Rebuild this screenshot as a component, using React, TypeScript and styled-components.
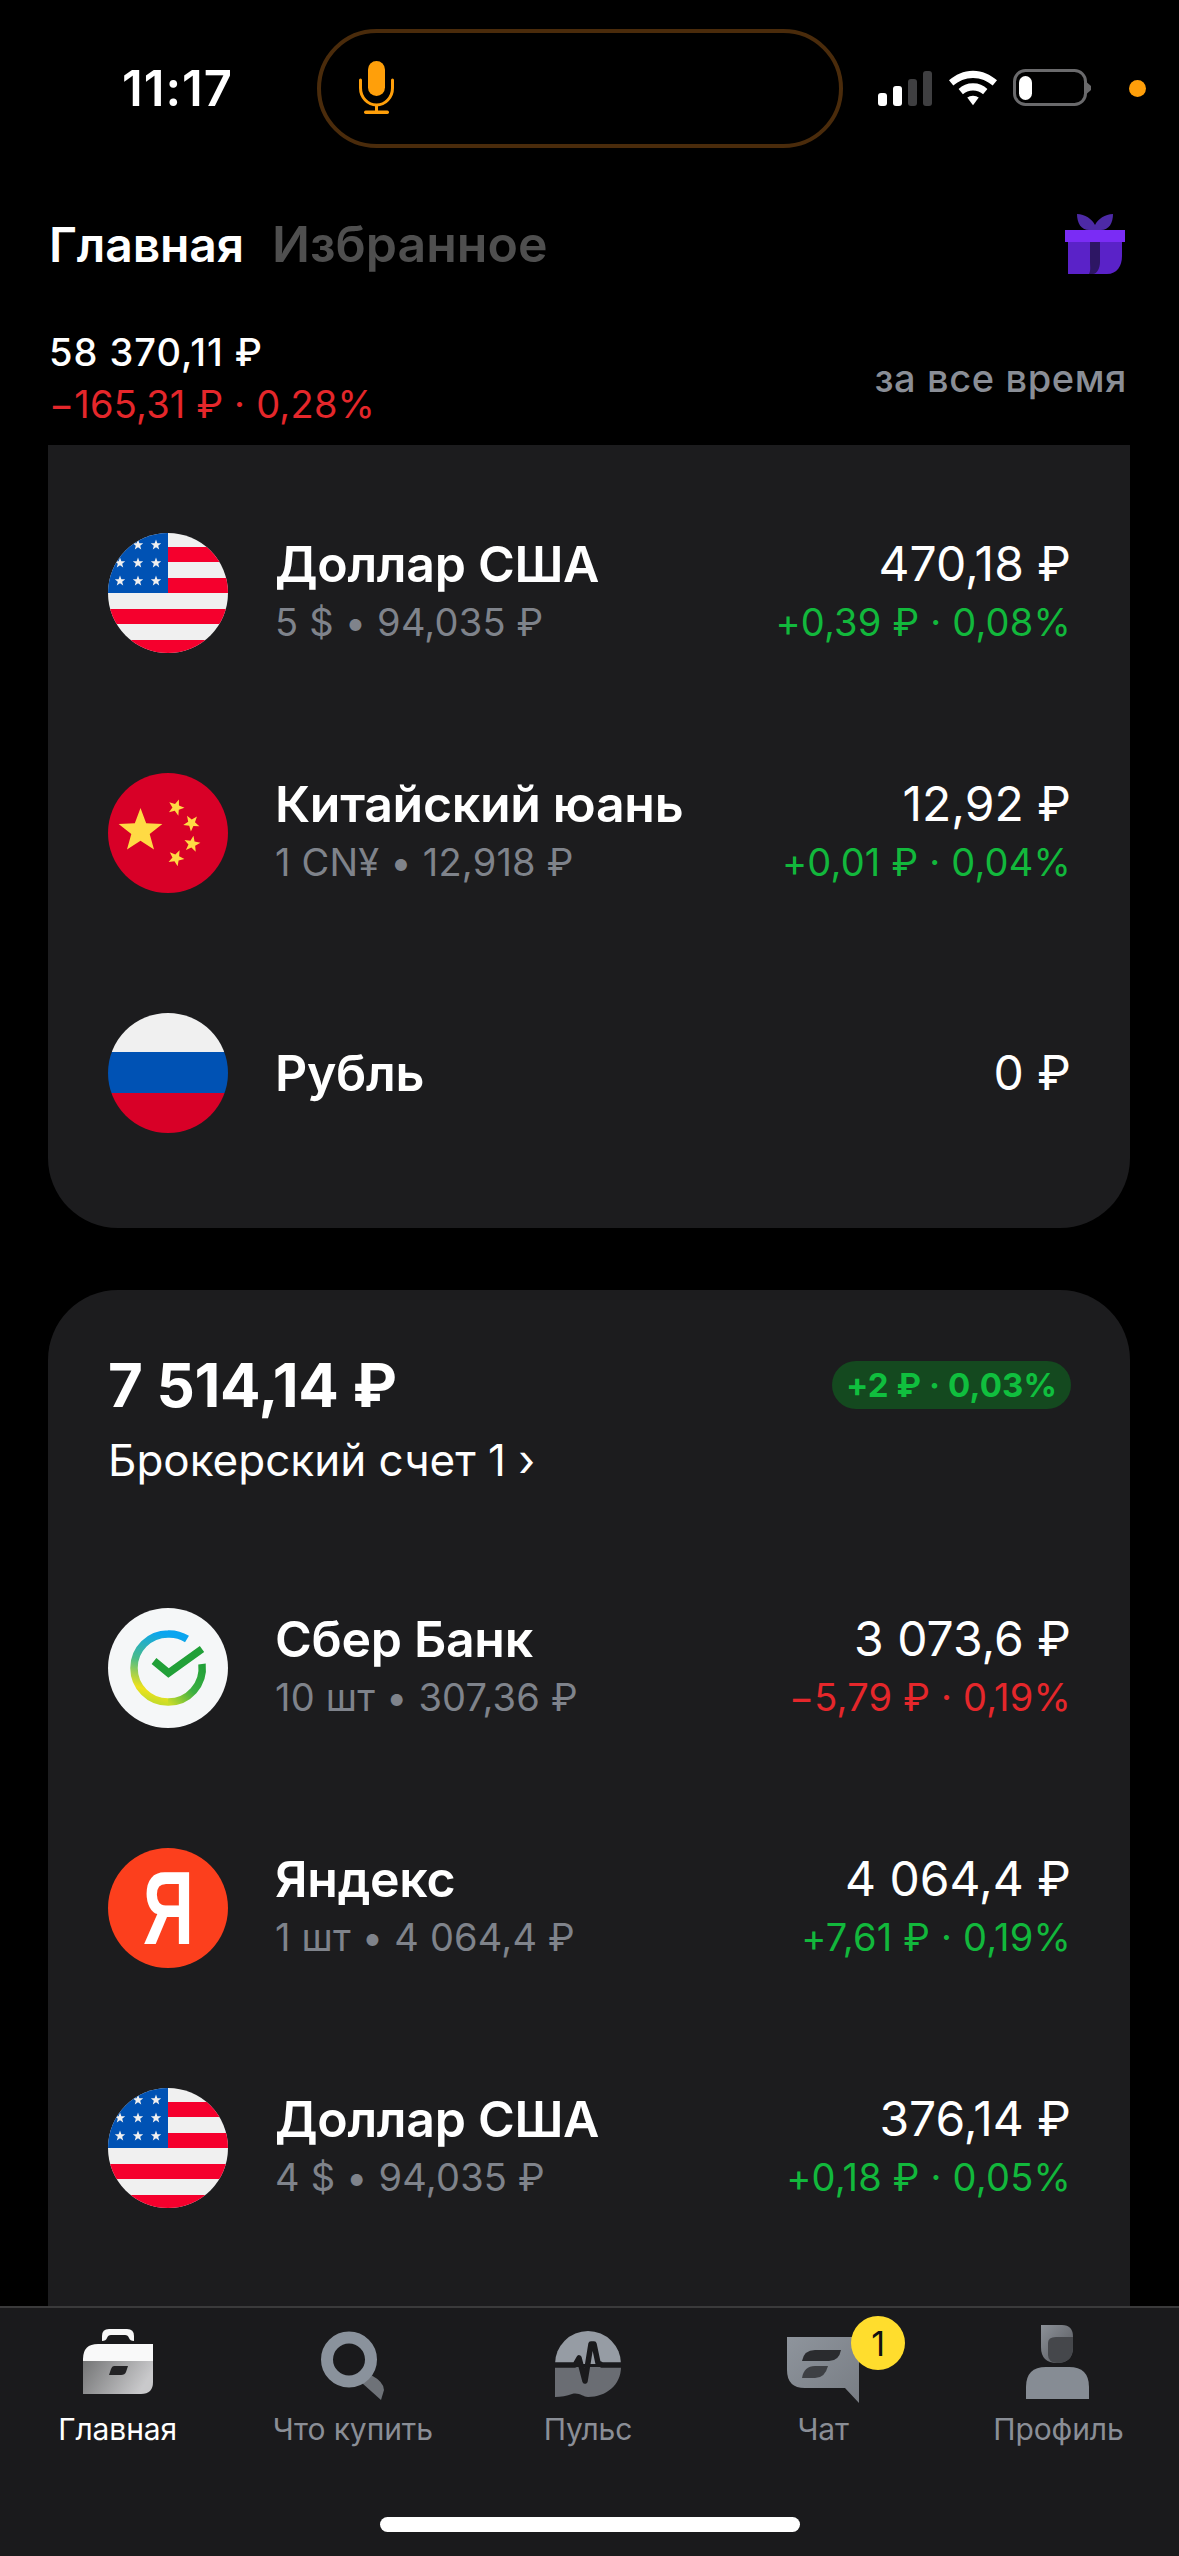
import React from 'react'
import styled, { createGlobalStyle } from 'styled-components'

const GlobalStyle = createGlobalStyle`
  html, body {
    margin: 0;
    padding: 0;
    background: #000;
  }
  body {
    font-family: Inter, "Noto Sans", "Liberation Sans", sans-serif;
  }
  * {
    box-sizing: border-box;
  }
`

const Screen = styled.div`
  position: relative;
  width: 1179px;
  height: 2556px;
  overflow: hidden;
  background: #000;
  color: #fff;
`
const StatusBar = styled.div`
  display: flex;
  align-items: center;
  height: 118px;
  margin-top: 29px;
  padding-left: 122px;
`
const Time = styled.div`
  width: 195px;
  font-size: 49px;
  font-weight: 600;
  letter-spacing: 1px;
`
const Island = styled.div`
  display: flex;
  align-items: center;
  width: 526px;
  height: 119px;
  padding-left: 37px;
  border: 4px solid #4a2b0b;
  border-radius: 60px;
`
const StatusIcons = styled.div`
  display: flex;
  align-items: center;
  margin-left: 35px;
  gap: 16px;
`
const OrangeDot = styled.div`
  width: 17px;
  height: 17px;
  margin-left: 38px;
  border-radius: 50%;
  background: #ff9f0a;
`
const Header = styled.div`
  display: flex;
  align-items: center;
  justify-content: space-between;
  height: 62px;
  margin-top: 66px;
  padding: 0 54px 0 49px;
`
const Tabs = styled.div`
  display: flex;
  align-items: baseline;
  gap: 28px;
`
const Tab = styled.div<{ $active?: boolean }>`
  font-size: ${({ $active }) => ($active ? '48px' : '50px')};
  font-weight: 600;
  letter-spacing: ${({ $active }) => ($active ? '-0.1px' : '0')};
  color: ${({ $active }) => ($active ? '#fff' : '#4f4f4f')};
`
const Summary = styled.div`
  display: flex;
  align-items: center;
  justify-content: space-between;
  height: 100px;
  margin: 53px 0 17px;
  padding: 0 52px 0 49px;
`
const SummaryTotal = styled.div`
  font-size: 38px;
  font-weight: 500;
  line-height: 52px;
  letter-spacing: 1px;
`
const SummaryDelta = styled.div`
  font-size: 38px;
  line-height: 52px;
  letter-spacing: 0.2px;
  color: #e5272b;
`
const Period = styled.div`
  font-size: 38px;
  font-weight: 500;
  letter-spacing: 0.6px;
  color: #8a8e96;
`
const Card = styled.div<{ $first?: boolean }>`
  margin: ${({ $first }) => ($first ? '0' : '62px')} 49px 0 48px;
  padding: ${({ $first }) => ($first ? '28px 59px 35px 60px' : '0 59px 200px 60px')};
  background: #1c1c1e;
  border-radius: ${({ $first }) => ($first ? '0 0 70px 70px' : '70px 70px 0 0')};
`
const CardHead = styled.div`
  height: 258px;
  padding-top: 65px;
`
const CardHeadTop = styled.div`
  display: flex;
  align-items: center;
  justify-content: space-between;
  height: 60px;
`
const CardTotal = styled.div`
  font-size: 60px;
  font-weight: 700;
  letter-spacing: -0.3px;
`
const Pill = styled.div`
  display: flex;
  align-items: center;
  height: 48px;
  padding: 0 14px;
  border-radius: 24px;
  background: #14491f;
  color: #10bf3e;
  font-size: 33px;
  font-weight: 700;
  letter-spacing: 0.1px;
`
const AccountName = styled.div`
  margin-top: 20px;
  font-size: 44px;
  line-height: 50px;
`
const Row = styled.div`
  display: flex;
  align-items: center;
  height: 240px;
`
const Avatar = styled.div`
  flex: none;
  width: 120px;
  height: 120px;
  margin-right: 47px;
  border-radius: 50%;
  overflow: hidden;
`
const YandexMark = styled(Avatar)`
  display: flex;
  align-items: center;
  justify-content: center;
  background: #fc3f1d;
  font-family: "Liberation Sans", sans-serif;
  font-size: 104px;
  font-weight: 700;
`
const YandexLetter = styled.span`
  display: block;
  transform: scaleX(0.68);
`
const RowMain = styled.div`
  flex: 1;
  min-width: 0;
`
const RowSide = styled.div`
  text-align: right;
`
const Name = styled.div`
  font-size: 50px;
  font-weight: 600;
  line-height: 58px;
  letter-spacing: -0.3px;
`
const Sub = styled.div`
  font-size: 38px;
  line-height: 58px;
  letter-spacing: 0.2px;
  color: #7f838b;
`
const Value = styled.div`
  font-size: 48px;
  line-height: 58px;
`
const Delta = styled.div<{ $down?: boolean }>`
  font-size: 38px;
  line-height: 58px;
  letter-spacing: 0.2px;
  color: ${({ $down }) => ($down ? '#e5272b' : '#12b83c')};
`
const TabBar = styled.div`
  position: absolute;
  left: 0;
  right: 0;
  bottom: 0;
  height: 250px;
  border-top: 2px solid #3a3a3b;
  background: #1a1a1c;
`
const TabBarItems = styled.div`
  display: grid;
  grid-template-columns: repeat(5, 1fr);
  padding-right: 3px;
`
const TabItem = styled.div<{ $active?: boolean }>`
  position: relative;
  display: flex;
  flex-direction: column;
  align-items: center;
  color: ${({ $active }) => ($active ? '#fff' : '#8a8e96')};
`
const TabIcon = styled.div`
  display: flex;
  justify-content: center;
  height: 96px;
`
const TabLabel = styled.div`
  margin-top: 7px;
  font-size: 30px;
  line-height: 36px;
  letter-spacing: -0.1px;
`
const Badge = styled.div`
  position: absolute;
  top: 8px;
  left: 50%;
  margin-left: 28px;
  display: flex;
  align-items: center;
  justify-content: center;
  width: 54px;
  height: 54px;
  border-radius: 50%;
  background: #ffdd2d;
  color: #111;
  font-size: 34px;
`
const HomeIndicator = styled.div`
  position: absolute;
  left: 380px;
  bottom: 24px;
  width: 420px;
  height: 15px;
  border-radius: 8px;
  background: #fff;
`

const Star = ({ x, y, r, fill, rot = 0 }: { x: number; y: number; r: number; fill: string; rot?: number }) => {
  const points = Array.from({ length: 10 }, (_, i) => {
    const a = (Math.PI / 5) * i - Math.PI / 2 + (rot * Math.PI) / 180
    const rad = i % 2 === 0 ? r : r * 0.42
    return `${(x + rad * Math.cos(a)).toFixed(2)},${(y + rad * Math.sin(a)).toFixed(2)}`
  })
  return <polygon points={points.join(' ')} fill={fill} />
}

const UsFlag = () => (
  <svg width="120" height="120" viewBox="0 0 120 120">
    <rect width="120" height="120" fill="#f0f0f0" />
    {[14, 45, 76, 107].map((y) => (
      <rect key={y} x={y < 60 ? 60 : 0} y={y} width="120" height="15" fill="#f5002d" />
    ))}
    <rect x="0" y="0" width="60" height="60" fill="#0052b4" />
    {[
      [30, 12],
      [48, 12],
      [12, 30],
      [30, 30],
      [48, 30],
      [12, 48],
      [30, 48],
      [48, 48],
    ].map(([x, y]) => (
      <Star key={`${x}-${y}`} x={x} y={y} r={5.5} fill="#f0f0f0" />
    ))}
  </svg>
)

const CnFlag = () => (
  <svg width="120" height="120" viewBox="0 0 120 120">
    <rect width="120" height="120" fill="#d80027" />
    <Star x={32.5} y={58} r={23} fill="#ffda44" />
    <Star x={68} y={34.5} r={8.5} fill="#ffda44" rot={20} />
    <Star x={83.5} y={50} r={8.5} fill="#ffda44" rot={40} />
    <Star x={84} y={71} r={8.5} fill="#ffda44" rot={10} />
    <Star x={68} y={85} r={8.5} fill="#ffda44" rot={25} />
  </svg>
)

const RuFlag = () => (
  <svg width="120" height="120" viewBox="0 0 120 120">
    <rect width="120" height="39" fill="#f0f0f0" />
    <rect y="39" width="120" height="41" fill="#0052b4" />
    <rect y="80" width="120" height="40" fill="#d80027" />
  </svg>
)

const SberLogo = () => (
  <svg width="120" height="120" viewBox="0 0 120 120">
    <defs>
      <linearGradient id="sberLeft" x1="0.6" y1="0" x2="0.4" y2="1">
        <stop offset="0" stopColor="#0aa5f0" />
        <stop offset="0.45" stopColor="#49bb8a" />
        <stop offset="0.85" stopColor="#efe21c" />
        <stop offset="1" stopColor="#c8dc2a" />
      </linearGradient>
      <linearGradient id="sberRight" x1="0" y1="1" x2="1" y2="0">
        <stop offset="0" stopColor="#c8dc2a" />
        <stop offset="0.5" stopColor="#3cb043" />
        <stop offset="1" stopColor="#21a038" />
      </linearGradient>
    </defs>
    <rect width="120" height="120" fill="#f5f7f8" />
    <path d="M79 31 A34 34 0 0 0 60 26 A34 34 0 0 0 60 94" fill="none" stroke="url(#sberLeft)" strokeWidth="7.5" />
    <path d="M60 94 A34 34 0 0 0 94 56" fill="none" stroke="url(#sberRight)" strokeWidth="7.5" />
    <path d="M46 53 L60.5 65 L94 41" fill="none" stroke="#21a038" strokeWidth="7.5" />
  </svg>
)

const MicIcon = () => (
  <svg width="38" height="54" viewBox="0 0 38 54">
    <rect x="10" y="0" width="17" height="35" rx="8.5" fill="#ff9f0a" />
    <path d="M2.5 19 v8 a16 17 0 0 0 32 0 v-8" fill="none" stroke="#ff9f0a" strokeWidth="3" strokeLinecap="round" />
    <rect x="17" y="44" width="3" height="6" fill="#ff9f0a" />
    <rect x="6" y="49.5" width="25" height="3.5" rx="1.7" fill="#ff9f0a" />
  </svg>
)

const SignalIcon = () => (
  <svg width="55" height="35" viewBox="0 0 55 35">
    <rect x="0" y="22" width="9" height="13" rx="3" fill="#fff" />
    <rect x="15" y="15" width="9" height="20" rx="3" fill="#fff" />
    <rect x="30" y="8" width="9" height="27" rx="3" fill="#3f3f41" />
    <rect x="45" y="0" width="9" height="35" rx="3" fill="#3f3f41" />
  </svg>
)

const WifiIcon = () => (
  <svg width="48" height="36" viewBox="0 0 50 36">
    <path d="M25 0 C35 0 43 4 50 10 L45.5 15.5 C40 10.5 33 7.5 25 7.5 C17 7.5 10 10.5 4.5 15.5 L0 10 C7 4 15 0 25 0 Z" fill="#fff" />
    <path d="M25 13 C31 13 36 15 40 19 L35.5 24.5 C33 22 29 20.5 25 20.5 C21 20.5 17 22 14.5 24.5 L10 19 C14 15 19 13 25 13 Z" fill="#fff" />
    <path d="M25 26 C27.5 26 29.5 26.8 31 28 L25 36 L19 28 C20.5 26.8 22.5 26 25 26 Z" fill="#fff" />
  </svg>
)

const BatteryIcon = () => (
  <svg width="78" height="38" viewBox="0 0 78 38">
    <rect x="1.5" y="1.5" width="71" height="34" rx="11" fill="none" stroke="#6a6a6c" strokeWidth="3" />
    <rect x="6" y="7" width="13" height="24" rx="6.5" fill="#fff" />
    <path d="M74 13.5 L78 17 V21 L74 24.5 Z" fill="#6a6a6c" />
  </svg>
)

const GiftIcon = () => (
  <svg width="60" height="60" viewBox="0 0 60 60">
    <path d="M12 0 C20 0 27 5 30 11 C33 5 40 0 48 0 C48 9 44 16 36 16 H24 C16 16 12 9 12 0 Z" fill="#4d2aa6" />
    <rect x="0" y="16" width="60" height="12" fill="#7a2cf5" />
    <path d="M3 28 H57 V42 C57 52 52 60 42 60 H3 Z" fill="#5a22c8" />
    <path d="M25 28 H35 V48 C35 54 32 60 28 60 H24 C26 56 25 52 25 48 Z" fill="#2d1664" />
  </svg>
)

const BriefcaseIcon = () => (
  <svg width="70" height="96" viewBox="0 -21 70 96">
    <defs>
      <linearGradient id="caseBody" x1="0" y1="0" x2="1" y2="0.3">
        <stop offset="0" stopColor="#747576" />
        <stop offset="1" stopColor="#c9c9cb" />
      </linearGradient>
    </defs>
    <path d="M19 12 V7 Q19 0 26 0 H44 Q51 0 51 7 V12 Q47 12 46 9 Q45 6 42 6 H28 Q25 6 24 9 Q23 12 19 12 Z" fill="#f7f7f7" />
    <path d="M15 15 H70 V32 H0 V30 Q0 15 15 15 Z" fill="#f9f9f9" />
    <path d="M0 32 H70 V53 Q70 65 58 65 H0 Z" fill="url(#caseBody)" />
    <path d="M31 37 H45 L43 43 Q42 46 38 46 H26 L28 40 Q29 37 31 37 Z" fill="#232325" />
  </svg>
)

const SearchIcon = () => (
  <svg width="64" height="96" viewBox="0 -24 64 96">
    <path d="M41 51 L50 43 Q63 50 63 58 L60 68 Z" fill="#6e7278" />
    <circle cx="28" cy="27.5" r="22" fill="none" stroke="#8a929c" strokeWidth="12" />
  </svg>
)

const PulseIcon = () => (
  <svg width="66" height="96" viewBox="0 -23 66 96">
    <path d="M0 33 A33 33 0 0 1 66 33 Z" fill="#969ca4" />
    <path d="M0 36 H66 C66 54 51 66 33 66 C28 66 24 61 17 63 C12 65 6 66 0 66 Z" fill="#6a6d73" />
    <path d="M0 34 H20 L24 27 L30 50 L36 13 H39 L43 32 L47 34 H66" fill="none" stroke="#1a1a1c" strokeWidth="5.5" strokeLinejoin="round" />
  </svg>
)

const ChatIcon = () => (
  <svg width="72" height="96" viewBox="0 -29 72 96">
    <defs>
      <linearGradient id="chatFill" x1="0" y1="0" x2="1" y2="1">
        <stop offset="0" stopColor="#8e949c" />
        <stop offset="1" stopColor="#787d84" />
      </linearGradient>
    </defs>
    <path d="M0 0 H72 V66 L58 51 H18 Q0 51 0 33 Z" fill="url(#chatFill)" />
    <path d="M15 24 Q17 13 28 13 H54 Q52 24 42 24 Z" fill="#2a2b2e" />
    <path d="M15 41 Q17 29 28 29 H41 Q38 41 28 41 Z" fill="#3e4044" />
  </svg>
)

const ProfileIcon = () => (
  <svg width="64" height="96" viewBox="0 -17 64 96">
    <defs>
      <linearGradient id="hairFill" x1="0" y1="0" x2="1" y2="1">
        <stop offset="0" stopColor="#8c9198" />
        <stop offset="1" stopColor="#55575c" />
      </linearGradient>
    </defs>
    <path d="M15 0 H36 Q47 0 47 12 V22 Q47 38 31 38 Q15 38 15 22 Z" fill="url(#hairFill)" />
    <path d="M22 18 Q22 12 30 12 H47 V22 Q47 38 31 38 Q22 37 22 30 Z" fill="#45474b" />
    <path d="M0 74 V62 Q0 42 20 42 H43 Q63 42 63 62 V74 Z" fill="#868c94" />
  </svg>
)

type Position = {
  name: string
  sub?: string
  value: string
  delta?: string
  down?: boolean
  icon: React.ReactNode
}

const currencies: Position[] = [
  { name: 'Доллар США', sub: '5 $ • 94,035 ₽', value: '470,18 ₽', delta: '+0,39 ₽ · 0,08%', icon: <UsFlag /> },
  { name: 'Китайский юань', sub: '1 CN¥ • 12,918 ₽', value: '12,92 ₽', delta: '+0,01 ₽ · 0,04%', icon: <CnFlag /> },
  { name: 'Рубль', value: '0 ₽', icon: <RuFlag /> },
]

const stocks: Position[] = [
  { name: 'Сбер Банк', sub: '10 шт • 307,36 ₽', value: '3 073,6 ₽', delta: '−5,79 ₽ · 0,19%', down: true, icon: <SberLogo /> },
  { name: 'Яндекс', sub: '1 шт • 4 064,4 ₽', value: '4 064,4 ₽', delta: '+7,61 ₽ · 0,19%', icon: null },
  { name: 'Доллар США', sub: '4 $ • 94,035 ₽', value: '376,14 ₽', delta: '+0,18 ₽ · 0,05%', icon: <UsFlag /> },
]

const PositionRow = ({ item }: { item: Position }) => (
  <Row>
    {item.icon ? (
      <Avatar>{item.icon}</Avatar>
    ) : (
      <YandexMark>
        <YandexLetter>Я</YandexLetter>
      </YandexMark>
    )}
    <RowMain>
      <Name>{item.name}</Name>
      {item.sub && <Sub>{item.sub}</Sub>}
    </RowMain>
    <RowSide>
      <Value>{item.value}</Value>
      {item.delta && <Delta $down={item.down}>{item.delta}</Delta>}
    </RowSide>
  </Row>
)

export default function App() {
  return (
    <Screen>
      <GlobalStyle />
      <StatusBar>
        <Time>11:17</Time>
        <Island>
          <MicIcon />
        </Island>
        <StatusIcons>
          <SignalIcon />
          <WifiIcon />
          <BatteryIcon />
        </StatusIcons>
        <OrangeDot />
      </StatusBar>
      <Header>
        <Tabs>
          <Tab $active>Главная</Tab>
          <Tab>Избранное</Tab>
        </Tabs>
        <GiftIcon />
      </Header>
      <Summary>
        <div>
          <SummaryTotal>58 370,11 ₽</SummaryTotal>
          <SummaryDelta>−165,31 ₽ · 0,28%</SummaryDelta>
        </div>
        <Period>за все время</Period>
      </Summary>
      <Card $first>
        {currencies.map((item) => (
          <PositionRow key={item.name} item={item} />
        ))}
      </Card>
      <Card>
        <CardHead>
          <CardHeadTop>
            <CardTotal>7 514,14 ₽</CardTotal>
            <Pill>+2 ₽ · 0,03%</Pill>
          </CardHeadTop>
          <AccountName>Брокерский счет 1 ›</AccountName>
        </CardHead>
        {stocks.map((item) => (
          <PositionRow key={item.name} item={item} />
        ))}
      </Card>
      <TabBar>
        <TabBarItems>
          <TabItem $active>
            <TabIcon>
              <BriefcaseIcon />
            </TabIcon>
            <TabLabel>Главная</TabLabel>
          </TabItem>
          <TabItem>
            <TabIcon>
              <SearchIcon />
            </TabIcon>
            <TabLabel>Что купить</TabLabel>
          </TabItem>
          <TabItem>
            <TabIcon>
              <PulseIcon />
            </TabIcon>
            <TabLabel>Пульс</TabLabel>
          </TabItem>
          <TabItem>
            <TabIcon>
              <ChatIcon />
            </TabIcon>
            <Badge>1</Badge>
            <TabLabel>Чат</TabLabel>
          </TabItem>
          <TabItem>
            <TabIcon>
              <ProfileIcon />
            </TabIcon>
            <TabLabel>Профиль</TabLabel>
          </TabItem>
        </TabBarItems>
        <HomeIndicator />
      </TabBar>
    </Screen>
  )
}
